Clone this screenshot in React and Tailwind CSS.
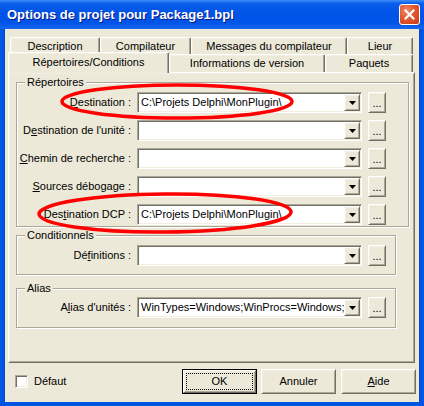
import React from "react";

const raised =
  "bg-[#ECE9D8] border border-t-white border-l-white border-b-[#716F64] border-r-[#716F64] shadow-[inset_1px_1px_0_#F1EFE2,inset_-1px_-1px_0_#ACA899]";
const sunken =
  "border border-t-[#ACA899] border-l-[#ACA899] border-b-white border-r-white shadow-[inset_1px_1px_0_#716F64,inset_-1px_-1px_0_#F1EFE2]";

function DropBtn() {
  return (
    <div className={`w-[16px] h-[17px] flex items-center justify-center ${raised}`}>
      <svg width="7" height="4" viewBox="0 0 7 4">
        <polygon points="0,0 7,0 3.5,4" fill="#000" />
      </svg>
    </div>
  );
}

function Combo({ value }) {
  return (
    <div className={`w-[225px] h-[21px] flex bg-white p-[1px] ${sunken}`}>
      <div className="flex-1 overflow-hidden whitespace-nowrap pl-[2px] text-[11px] leading-[17px] text-black">
        {value}
      </div>
      <DropBtn />
    </div>
  );
}

function Ellipsis() {
  return (
    <div className={`w-[18px] h-[21px] flex items-end justify-center pb-[3px] text-[11px] leading-[11px] text-black ${raised}`}>
      ...
    </div>
  );
}

function Row({ label, value }) {
  return (
    <div className="flex items-center h-[21px]">
      <div className="w-[114px] text-right text-[11px] text-black whitespace-nowrap">{label}</div>
      <div className="ml-[6px]">
        <Combo value={value} />
      </div>
      <div className="ml-[6px]">
        <Ellipsis />
      </div>
    </div>
  );
}

function Group({ title, className, children }) {
  return (
    <div
      className={`relative border border-[#ACA899] shadow-[1px_1px_0_#FFFFFF,inset_1px_1px_0_#FFFFFF] ${className}`}
    >
      <span className="absolute left-[8px] top-[-7px] px-[2px] bg-[#ECE9D8] text-[11px] leading-[13px] text-black">
        {title}
      </span>
      {children}
    </div>
  );
}

function Tab({ w, label, selected, row1 }) {
  const base =
    "flex justify-center items-center text-[11px] text-black whitespace-nowrap bg-[#ECE9D8] rounded-t-[2px] border-t border-l border-r border-t-white border-l-white border-r-[#716F64] shadow-[inset_-1px_0_0_#ACA899,inset_1px_1px_0_#F1EFE2]";
  if (selected) {
    return (
      <div className={`${base} self-start h-[21px] relative z-10 pb-[1px]`} style={{ width: w }}>
        {label}
      </div>
    );
  }
  return (
    <div className={`${base} ${row1 ? "h-[17px]" : "h-[18px]"}`} style={{ width: w }}>
      {label}
    </div>
  );
}

const U = ({ children }) => <span className="underline underline-offset-[1px]">{children}</span>;

export default function App() {
  return (
    <div className="relative w-[424px] h-[406px] flex flex-col bg-[#0055E5] font-['Liberation_Sans',Arial,sans-serif] overflow-hidden">
      {/* Title bar */}
      <div className="h-[29px] flex items-center bg-[linear-gradient(to_bottom,#3C8EF8_0%,#0A5EEB_12%,#0053E6_45%,#0055E8_80%,#1A66F0_100%)]">
        <div className="pl-[7px] pt-[1px] text-[13px] font-bold text-white [text-shadow:1px_1px_0_#0A1883] whitespace-nowrap">
          Options de projet pour Package1.bpl
        </div>
        <div className="ml-auto mr-[4px] w-[21px] h-[21px] rounded-[3px] border border-white bg-[radial-gradient(circle_at_35%_30%,#F08A6A_0%,#E2582F_45%,#C63A14_100%)] flex items-center justify-center">
          <svg width="11" height="11" viewBox="0 0 11 11">
            <path d="M1.5 1.5 L9.5 9.5 M9.5 1.5 L1.5 9.5" stroke="#fff" strokeWidth="2.2" strokeLinecap="square" />
          </svg>
        </div>
      </div>

      {/* Client area */}
      <div className="flex-1 mx-[4px] mb-[4px] bg-[#ECE9D8] flex flex-col border-l border-r border-[#0745D2]">
        {/* Tabs */}
        <div className="ml-[3px] mt-[8px] flex flex-col w-[407px]">
          <div className="flex pl-[2px]">
            <Tab row1 w={90} label="Description" />
            <Tab row1 w={91} label="Compilateur" />
            <Tab row1 w={156} label="Messages du compilateur" />
            <Tab row1 w={66} label="Lieur" />
          </div>
          <div className="flex items-end h-[20px] mt-[-2px]">
            <Tab selected w={161} label="Répertoires/Conditions" />
            <Tab w={156} label="Informations de version" />
            <Tab w={88} label="Paquets" />
          </div>
          {/* Panel */}
          <div className="h-[291px] w-[407px] border border-t-white border-l-white border-b-[#716F64] border-r-[#716F64] shadow-[inset_1px_1px_0_#F1EFE2,inset_-1px_-1px_0_#ACA899] pt-[9px] pl-[7px] flex flex-col">
            <Group title="Répertoires" className="w-[393px] h-[145px] pt-[9px]">
              <div className="flex flex-col gap-[7px]">
                <Row label={<><U>D</U>estination :</>} value="C:\Projets Delphi\MonPlugin\" />
                <Row label={<>D<U>e</U>stination de l'unité :</>} value="" />
                <Row label={<><U>C</U>hemin de recherche :</>} value="" />
                <Row label={<><U>S</U>ources débogage :</>} value="" />
                <Row label={<>Des<U>t</U>ination DCP :</>} value="C:\Projets Delphi\MonPlugin\" />
              </div>
            </Group>
            <Group title="Conditionnels" className="mt-[8px] w-[380px] h-[40px] pt-[9px]">
              <Row label={<>Dé<U>f</U>initions :</>} value="" />
            </Group>
            <Group title="Alias" className="mt-[13px] w-[380px] h-[40px] pt-[8px]">
              <Row label={<>A<U>l</U>ias d'unités :</>} value="WinTypes=Windows;WinProcs=Windows;" />
            </Group>
          </div>
        </div>

        {/* Bottom row */}
        <div className="mt-[6px] h-[25px] flex items-center pl-[10px] pr-[3px]">
          <div className={`w-[13px] h-[13px] bg-white ${sunken}`} />
          <div className="ml-[6px] text-[11px] text-black">Défaut</div>
          <div className="ml-auto flex">
            <div className="w-[75px] h-[25px] border border-black">
              <div className={`w-full h-full p-[2px] ${raised}`}>
                <div className="w-full h-full border border-dotted border-black flex items-center justify-center text-[11px] text-black">
                  OK
                </div>
              </div>
            </div>
            <div className={`ml-[4px] w-[75px] h-[25px] flex items-center justify-center text-[11px] text-black ${raised}`}>
              Annuler
            </div>
            <div className={`ml-[5px] w-[75px] h-[25px] flex items-center justify-center text-[11px] text-black ${raised}`}>
              <span><U>A</U>ide</span>
            </div>
          </div>
        </div>
      </div>

      {/* Red annotation ellipses */}
      <svg className="absolute left-0 top-0 pointer-events-none" width="424" height="406" viewBox="0 0 424 406">
        <ellipse cx="177" cy="101.5" rx="115" ry="16.5" fill="none" stroke="#FF0000" strokeWidth="3.5" />
        <ellipse cx="165" cy="213" rx="126" ry="19" fill="none" stroke="#FF0000" strokeWidth="3.5" transform="rotate(-0.5 165 213)" />
      </svg>
    </div>
  );
}
